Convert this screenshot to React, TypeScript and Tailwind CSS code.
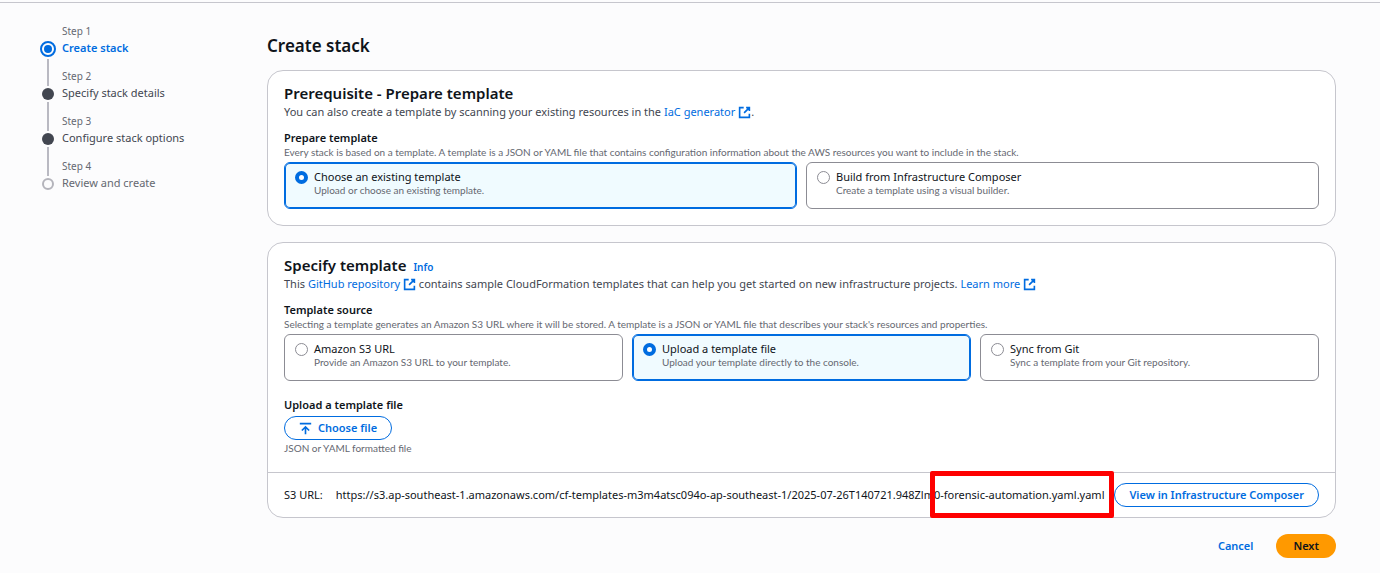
import type { ReactNode } from "react";

function ExternalIcon() {
  return (
    <svg viewBox="0 0 16 16" className="inline-block size-[13px] align-[-3px]" fill="none" stroke="currentColor" strokeWidth="2" aria-hidden="true">
      <path d="M10 2h4v4M14 2L7.5 8.5M7 2H2v12h12V9.5" />
    </svg>
  );
}

function UploadIcon() {
  return (
    <svg viewBox="0 0 16 16" className="size-[13px]" fill="none" stroke="currentColor" strokeWidth="2" aria-hidden="true">
      <path d="M1 2h14M8 15V6M3.5 10.5L8 6l4.5 4.5" />
    </svg>
  );
}

type StepState = "active" | "open" | "disabled";

const steps: { title: string; state: StepState }[] = [
  { title: "Create stack", state: "active" },
  { title: "Specify stack details", state: "open" },
  { title: "Configure stack options", state: "open" },
  { title: "Review and create", state: "disabled" },
];

const stepTitle: Record<StepState, string> = {
  active: "font-semibold text-[#006ce0]",
  open: "text-[#424650]",
  disabled: "text-[#656871]",
};

function StepDot({ state }: { state: StepState }) {
  if (state === "active") {
    return (
      <span className="flex size-4 items-center justify-center rounded-full border-2 border-[#006ce0]">
        <span className="size-2 rounded-full bg-[#006ce0]" />
      </span>
    );
  }
  if (state === "open") return <span className="size-3 rounded-full bg-[#424650]" />;
  return <span className="size-3 rounded-full border-2 border-[#b4b4bb]" />;
}

function Steps() {
  return (
    <nav aria-label="Steps" className="w-[267px] shrink-0 pt-5 pl-10">
      <ol>
        {steps.map((step, i) => (
          <li key={step.title} className="flex h-[45px] gap-[6px]">
            <span className="flex w-4 flex-col items-center">
              <span className={step.state === "active" ? "h-[18px]" : "flex h-5 flex-col pb-[2px]"}>
                {i > 0 && <span className="w-[2px] flex-1 bg-[#b9b9c2]" />}
              </span>
              <StepDot state={step.state} />
              {i < steps.length - 1 && <span className="mt-[2px] w-[2px] flex-1 bg-[#b9b9c2]" />}
            </span>
            <span className="flex flex-col">
              <span className="text-[10px] leading-[16px] text-[#656871]">Step {i + 1}</span>
              <a href="#" aria-current={step.state === "active" ? "step" : undefined} className={`text-[11px] leading-[18px] ${stepTitle[step.state]}`}>
                {step.title}
              </a>
            </span>
          </li>
        ))}
      </ol>
    </nav>
  );
}

function Link({ children, external }: { children: ReactNode; external?: boolean }) {
  return (
    <a href="#" className="text-[#006ce0]">
      {children}
      {external && <> <ExternalIcon /></>}
    </a>
  );
}

function Small({ children }: { children: ReactNode }) {
  return <span className="block font-['Lato','Noto_Sans',sans-serif] text-[10px] leading-[12px] text-[#656871]">{children}</span>;
}

function Tile({ name, title, text, checked }: { name: string; title: string; text: string; checked?: boolean }) {
  return (
    <label className="flex min-h-[47px] flex-1 gap-[6px] rounded-md border border-[#8c8c94] px-[10px] py-[7px] has-checked:border-[#006ce0] has-checked:bg-[#f0fbff] has-checked:inset-ring has-checked:inset-ring-[#006ce0]">
      <input type="radio" name={name} defaultChecked={checked} className="mt-px size-[13px] shrink-0 appearance-none rounded-full border border-[#8c8c94] bg-white checked:border-4 checked:border-[#006ce0]" />
      <span>
        <span className="block text-[11px] leading-[14px]">{title}</span>
        <Small>{text}</Small>
      </span>
    </label>
  );
}

function TileGroup({ name, label, text, children }: { name: string; label: string; text: string; children: ReactNode }) {
  return (
    <div role="radiogroup" aria-labelledby={name} className="mt-[9px]">
      <h3 id={name} className="text-[11px] leading-[16px] font-semibold">{label}</h3>
      <Small>{text}</Small>
      <div className="mt-1 flex gap-[9px]">{children}</div>
    </div>
  );
}

const card = "rounded-2xl border border-[#c6c6cd] bg-white";
const heading = "text-[15px] leading-[20px] font-semibold";
const outlineButton = "flex h-6 shrink-0 items-center rounded-full border border-[#006ce0] bg-white text-[11px] font-semibold text-[#006ce0]";

export default function App() {
  return (
    <div className="min-h-screen bg-[#fcfcfd] pt-[2px] font-['Noto_Sans',sans-serif] text-[#0f141a]">
      <div className="flex border-t border-[#c6c6cd]">
        <Steps />
        <main className="min-w-0 flex-1 pt-[31px] pr-11">
          <h1 className="text-[17px] leading-[24px] font-semibold">Create stack</h1>

          <section className={`mt-3 px-4 pt-3 pb-4 ${card}`}>
            <h2 className={heading}>Prerequisite - Prepare template</h2>
            <p className="text-[11px] leading-[18px] text-[#424650]">
              You can also create a template by scanning your existing resources in the <Link external>IaC generator</Link>.
            </p>
            <TileGroup name="prepare" label="Prepare template" text="Every stack is based on a template. A template is a JSON or YAML file that contains configuration information about the AWS resources you want to include in the stack.">
              <Tile name="prepare-option" title="Choose an existing template" text="Upload or choose an existing template." checked />
              <Tile name="prepare-option" title="Build from Infrastructure Composer" text="Create a template using a visual builder." />
            </TileGroup>
          </section>

          <section className={`mt-4 ${card}`}>
            <div className="px-4 pt-3 pb-[18px]">
              <div className="flex items-baseline gap-[7px]">
                <h2 className={heading}>Specify template</h2>
                <a href="#" className="text-[10px] leading-[12px] font-semibold text-[#006ce0]">Info</a>
              </div>
              <p className="text-[11px] leading-[18px] text-[#424650]">
                This <Link external>GitHub repository</Link> contains sample CloudFormation templates that can help you get started on new infrastructure projects. <Link external>Learn more</Link>
              </p>
              <TileGroup name="source" label="Template source" text="Selecting a template generates an Amazon S3 URL where it will be stored. A template is a JSON or YAML file that describes your stack's resources and properties.">
                <Tile name="source-option" title="Amazon S3 URL" text="Provide an Amazon S3 URL to your template." />
                <Tile name="source-option" title="Upload a template file" text="Upload your template directly to the console." checked />
                <Tile name="source-option" title="Sync from Git" text="Sync a template from your Git repository." />
              </TileGroup>
              <div className="mt-4 flex flex-col items-start">
                <h3 className="text-[11px] leading-[16px] font-semibold">Upload a template file</h3>
                <button type="button" className={`mt-[3px] mb-[2px] gap-[6px] px-[14px] ${outlineButton}`}>
                  <UploadIcon />
                  Choose file
                </button>
                <Small>JSON or YAML formatted file</Small>
              </div>
            </div>
            <div className="flex items-center border-t border-[#c6c6cd] px-4 py-[10px] text-[11px]">
              <span className="mr-[13px] shrink-0">S3 URL:</span>
              <span className="relative min-w-0 flex-1 whitespace-nowrap">
                https://s3.ap-southeast-1.amazonaws.com/cf-templates-m3m4atsc094o-ap-southeast-1/2025-07-26T140721.948Zlm0-forensic-automation.yaml.yaml
                <span className="absolute -top-4 right-0 h-[47px] w-[184px] rounded-[2px] border-5 border-[#fe0000]" />
              </span>
              <button type="button" className={`px-[14px] ${outlineButton}`}>View in Infrastructure Composer</button>
            </div>
          </section>

          <div className="mt-4 flex justify-end gap-[6px] text-[11px] font-semibold">
            <button type="button" className="h-6 rounded-full px-[17px] text-[#006ce0]">Cancel</button>
            <button type="button" className="h-6 rounded-full bg-[#ff9900] px-[17px]">Next</button>
          </div>
        </main>
      </div>
    </div>
  );
}
